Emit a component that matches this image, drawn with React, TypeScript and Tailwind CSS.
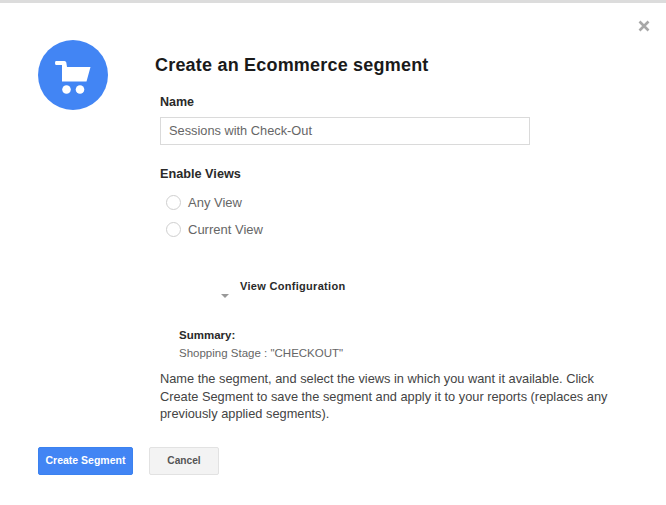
export default function App() {
  return (
    <div className="relative h-[505px] w-[666px] overflow-hidden bg-white font-['Liberation_Sans',Arial,sans-serif] text-[#333]">
      <div className="h-[3px] bg-[#dcdcdc]" />

      {/* close */}
      <svg className="absolute right-[16px] top-[20px]" width="12" height="12" viewBox="0 0 12 12">
        <path d="M1.5 1.5L10.5 10.5M10.5 1.5L1.5 10.5" stroke="#a8a8a8" strokeWidth="2.6" />
      </svg>

      <div className="flex pl-[38px] pt-[37px]">
        <div className="flex h-[70px] w-[70px] shrink-0 items-center justify-center rounded-full bg-[#4285f4]">
          <svg className="mt-[5px]" width="36" height="34" viewBox="0 0 36 34">
            <path d="M1 0H9.5Q11 0 11.3 1.5L12 6H35.5L31.5 20.5H7V4H1Q0 4 0 2Q0 0 1 0Z" fill="#fff" />
            <circle cx="11.5" cy="28.5" r="4.3" fill="#fff" />
            <circle cx="25" cy="28.5" r="4.3" fill="#fff" />
          </svg>
        </div>
        <div className="ml-[47px] w-[460px]">
          <h1 className="pt-[14px] text-[18px] font-bold leading-[22px] tracking-[0.2px] text-[#1a1a1a]">
            Create an Ecommerce segment
          </h1>
          <div className="pl-[5px]">
            <div className="mt-[18px] text-[12.5px] font-bold leading-[16px] text-[#2a2a2a]">Name</div>
            <div className="mt-[7px] flex h-[28px] w-[370px] items-center border border-[#dadada] pl-[8px] text-[12.8px] text-[#666]">
              Sessions with Check-Out
            </div>
            <div className="mt-[21px] text-[12.7px] font-bold leading-[16px] text-[#2a2a2a]">Enable Views</div>
            <div className="mt-[7px] flex h-[27px] items-center pl-[6px] text-[13px] text-[#666]">
              <span className="mr-[7px] h-[15px] w-[15px] rounded-full border border-[#cfcfcf]" />
              Any View
            </div>
            <div className="flex h-[27px] items-center pl-[6px] text-[13px] text-[#666]">
              <span className="mr-[7px] h-[15px] w-[15px] rounded-full border border-[#cfcfcf]" />
              Current View
            </div>
            <div className="mt-[36px] flex pl-[61px]">
              <span className="mt-[15px] h-0 w-0 border-x-[4px] border-t-[4px] border-x-transparent border-t-[#999]" />
              <span className="ml-[11px] text-[11px] font-bold leading-[14px] tracking-[0.3px] text-[#2a2a2a]">View Configuration</span>
            </div>
            <div className="mt-[29px] pl-[19px]">
              <div className="text-[11.5px] font-bold leading-[16px] text-[#2a2a2a]">Summary:</div>
              <div className="mt-[2px] text-[11.5px] leading-[16px] text-[#666]">Shopping Stage : "CHECKOUT"</div>
            </div>
            <p className="mt-[9px] w-[460px] text-[12.8px] leading-[17.5px] text-[#444]">
              Name the segment, and select the views in which you want it available. Click Create Segment to save the segment and apply it to your reports (replaces any previously applied segments).
            </p>
          </div>
        </div>
      </div>

      <div className="ml-[38px] mt-[24px] flex gap-[16px]">
        <button className="h-[28px] w-[95px] rounded-[2px] border border-[#3b82f0] bg-[#4285f4] text-[10.5px] font-bold text-white">Create Segment</button>
        <button className="h-[28px] w-[70px] rounded-[2px] border border-[#e2e2e2] bg-[#f3f3f3] text-[10.2px] font-bold text-[#555]">Cancel</button>
      </div>
    </div>
  );
}
